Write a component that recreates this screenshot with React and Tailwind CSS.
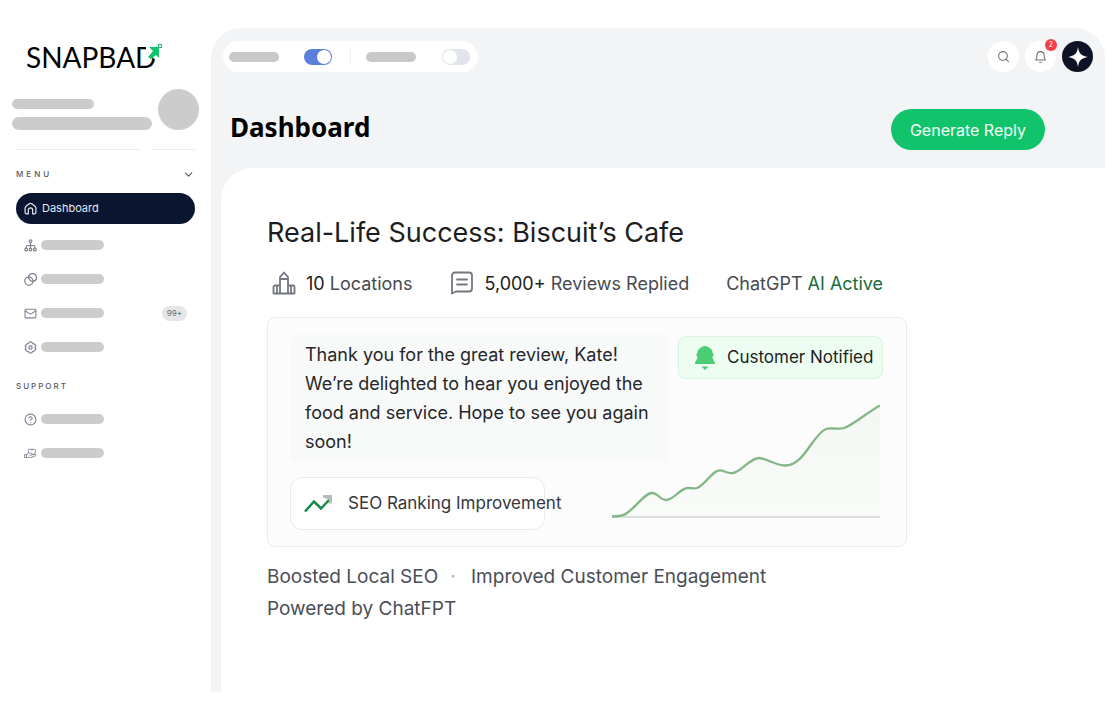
import { useState } from "react";
import { ChevronDown, CircleHelp, Mail, Search } from "lucide-react";
import { PiHandHeart } from "react-icons/pi";

function HomeIcon() {
  return (
    <svg viewBox="0 0 24 24" className="size-[13px] shrink-0" fill="none" stroke="currentColor" strokeWidth="2.200" strokeLinejoin="round" strokeLinecap="round">
      <path d="M2 11.500a4 4 0 0 1 1.500-3.200l6-5a4 4 0 0 1 5 0l6 5A4 4 0 0 1 22 11.500V19a3 3 0 0 1-3 3h-3v-7a4 4 0 0 0-8 0v7H5a3 3 0 0 1-3-3z" />
    </svg>
  );
}

function SitemapIcon() {
  return (
    <svg viewBox="0 0 24 24" className="size-[13px] shrink-0" fill="none" stroke="currentColor" strokeWidth="2.200">
      <circle cx="12" cy="4" r="2.500" />
      <path d="M12 7v10M4 17v-2a3 3 0 0 1 3-3h10a3 3 0 0 1 3 3v2" />
      <circle cx="4" cy="19.500" r="2.500" />
      <circle cx="12" cy="19.500" r="2.500" />
      <circle cx="20" cy="19.500" r="2.500" />
    </svg>
  );
}

function CoinsIcon() {
  return (
    <svg viewBox="0 0 24 24" className="size-[13px] shrink-0" fill="none" stroke="currentColor" strokeWidth="2.200">
      <circle cx="9" cy="15" r="7.500" />
      <path d="M8.500 7.500A7.200 7.200 0 1 1 16.500 15.500" />
      <path d="M8.500 7.500c.5 4 4 7.500 8 8" />
    </svg>
  );
}

function GearIcon() {
  return (
    <svg viewBox="0 0 24 24" className="size-[13px] shrink-0" fill="none" stroke="currentColor" strokeWidth="2.200" strokeLinejoin="round">
      <path d="M9.500 2.500a5 5 0 0 1 5 0L16 5l3.500.5 2.200 4L20 12l1.700 2.500-2.200 4L16 19l-1.500 2.500a5 5 0 0 1-5 0L8 19l-3.500-.5-2.200-4L4 12 2.300 9.500l2.200-4L8 5z" />
      <circle cx="12" cy="12" r="3" />
    </svg>
  );
}

const menuItems = [
  { name: "Network", icon: <SitemapIcon /> },
  { name: "Billing", icon: <CoinsIcon /> },
  { name: "Inbox", icon: <Mail size={13} />, badge: "99+" },
  { name: "Settings", icon: <GearIcon /> },
];

const supportItems = [
  { name: "Help", icon: <CircleHelp size={13} /> },
  { name: "Care", icon: <PiHandHeart size={13} /> },
];

function NavItem({ item }) {
  return (
    <li>
      <a href="#" aria-label={item.name} className="flex h-[34px] items-center pl-2 pr-2 text-[#7c8190]">
        <span className="w-[17px]">{item.icon}</span>
        <span className="h-[10px] w-[63px] rounded-full bg-[#cccccc]" />
        {item.badge && (
          <span className="ml-auto flex h-[15px] items-center rounded-full bg-[#e6e6e8] px-[5px] text-[8px] text-[#666a72]">
            {item.badge}
          </span>
        )}
      </a>
    </li>
  );
}

function Logo() {
  return (
    <a href="#" aria-label="Snapbad" className="relative ml-[14px] flex h-[28px] w-[137px] items-center font-[Lato,sans-serif] text-[28px] leading-none text-black">
      SNAPBAD
      <svg viewBox="0 0 17 17" className="absolute right-0 top-0 size-[17px]">
        <path d="M0 2h14v15h-4l-4-3-6 2z" fill="#fff" />
        <path d="M3 4h10v11l-3-3-5 4-3-2 5-6z" fill="#10c56e" />
        <rect x="12.500" y="1.500" width="3" height="3" fill="none" stroke="#10c56e" />
      </svg>
    </a>
  );
}

function Sidebar() {
  return (
    <aside className="w-[211px] shrink-0 pl-3 pr-4 pt-[43px]">
      <Logo />
      <div className="-mr-1 mt-[18px] flex items-end justify-between">
        <div className="flex flex-col gap-2">
          <div className="h-[10px] w-[82px] rounded-full bg-[#cccccc]" />
          <div className="h-[13px] w-[140px] rounded-full bg-[#cccccc]" />
        </div>
        <div className="size-[41px] rounded-full bg-[#cccccc]" />
      </div>
      <div className="ml-1 mt-[19px] flex gap-3">
        <div className="h-px grow bg-[#ececee]" />
        <div className="h-px w-[43px] bg-[#ececee]" />
      </div>
      <nav className="pl-1">
        <button className="mt-4 flex h-4 w-full items-center justify-between text-[8px] font-medium tracking-[3px] text-[#55585e]">
          MENU
          <ChevronDown size={13} />
        </button>
        <a href="#" className="mt-[11px] flex h-[31px] items-center gap-[5px] rounded-full bg-[#0a1530] pl-2 text-[11px] text-[#e4e8f0]">
          <HomeIcon />
          Dashboard
        </a>
        <ul className="mt-1">
          {menuItems.map((item) => <NavItem key={item.name} item={item} />)}
        </ul>
        <h2 className="mt-[14px] h-4 text-[8px] font-medium leading-4 tracking-[2px] text-[#55585e]">SUPPORT</h2>
        <ul className="mt-2">
          {supportItems.map((item) => <NavItem key={item.name} item={item} />)}
        </ul>
      </nav>
    </aside>
  );
}

function Toggle({ label, defaultChecked }) {
  const [on, setOn] = useState(defaultChecked);
  return (
    <input
      type="checkbox"
      role="switch"
      aria-label={label}
      checked={on}
      onChange={() => setOn(!on)}
      className="flex h-4 w-7 appearance-none items-center rounded-full bg-[#e1e4ec] p-px before:size-[14px] before:rounded-full before:bg-white before:content-[''] checked:justify-end checked:bg-[#5b80dc]"
    />
  );
}

function TopBar() {
  return (
    <div className="flex items-center justify-between px-3">
      <div className="flex h-[31px] items-center rounded-full bg-white pl-[6px] pr-2">
        <div className="h-[10px] w-[50px] rounded-full bg-[#c9c9c9]" />
        <div className="ml-[25px] flex"><Toggle label="First option" defaultChecked={true} /></div>
        <div className="ml-[18px] mr-[15px] h-4 w-px bg-[#eeeff1]" />
        <div className="h-[10px] w-[50px] rounded-full bg-[#c9c9c9]" />
        <div className="ml-[26px] flex"><Toggle label="Second option" defaultChecked={false} /></div>
      </div>
      <div className="flex items-center gap-[6px]">
        <button aria-label="Search" className="flex size-[31px] items-center justify-center rounded-full bg-white text-[#6d7076]">
          <Search size={13} />
        </button>
        <button aria-label="Notifications" className="relative flex size-[31px] items-center justify-center rounded-full bg-white text-[#6d7076]">
          <svg viewBox="0 0 24 24" className="size-[13px]" fill="none" stroke="currentColor" strokeWidth="2" strokeLinejoin="round" strokeLinecap="round">
            <path d="M3 18.500c2-2 2.500-4 2.500-9a6.500 6.500 0 0 1 13 0c0 5 .5 7 2.500 9zM10.500 22.500h3" />
          </svg>
          <span className="absolute -right-px -top-[2px] flex size-3 items-center justify-center rounded-full bg-[#f43f46] text-[7px] text-white">2</span>
        </button>
        <button aria-label="Assistant" className="flex size-[31px] items-center justify-center rounded-full bg-[#0d1226]">
          <svg viewBox="0 0 20 20" className="size-5" fill="#fff">
            <path d="M10 0c1 6.500 3 8.800 10 10-7 1.200-9 3.500-10 10-1-6.500-3-8.800-10-10 7-1.200 9-3.500 10-10z" />
          </svg>
        </button>
      </div>
    </div>
  );
}

function Stats() {
  return (
    <div className="mt-[14px] flex h-8 items-center whitespace-nowrap text-[18px] text-[#474a50]">
      <svg viewBox="0 0 24 24" className="ml-[5px] size-6" fill="none" stroke="#737780" strokeWidth="1.800" strokeLinejoin="round">
        <path d="M8 22.500V6L12 1.500 16 6v16.500zM8 8h8" />
        <path d="M8 14.500H3a1.500 1.500 0 0 0-1.500 1.500v6.500H8M16 14.500h5a1.500 1.500 0 0 1 1.500 1.500v6.500H16M5 14.500v8M19 14.500v8" />
      </svg>
      <p className="ml-[10px]"><span className="text-[#1b1c20]">10</span> Locations</p>
      <svg viewBox="0 0 24 24" className="ml-[38px] size-6" fill="none" stroke="#737780" strokeWidth="1.800" strokeLinejoin="round" strokeLinecap="round">
        <path d="M2 22.500V4.500a3 3 0 0 1 3-3h14a3 3 0 0 1 3 3v13a3 3 0 0 1-3 3H6z" />
        <path d="M7 8.500h10M7 13.500h10" />
      </svg>
      <p className="ml-[10px]"><span className="text-[#1b1c20]">5,000+</span> Reviews Replied</p>
      <p className="ml-[37px]">ChatGPT <span className="text-[#176c37]">AI Active</span></p>
    </div>
  );
}

const growthLine = "M0 113.500C7 113.500 11 113 15 110C25 103 33 90 40 90C46 90 48 97 54 97C62 97 68 85 76 85C79 85 82 86 85 85C93 82 100 68 107 67.500C112 67 115 71 121 70C129 69 138 55 147 55C153 55 166 63 173 62.500C193 62 200 32 214 26C219 24 226 27 232 25C241 22 253 11 268 2.500";

function GrowthChart() {
  return (
    <svg viewBox="0 0 268 116" className="mr-[3px] w-[268px] shrink-0" fill="none" role="img" aria-label="Growth over time">
      <defs>
        <linearGradient id="growth" x1="0" y1="0" x2="0" y2="1">
          <stop offset="0" stopColor="#f3f7f2" />
          <stop offset="1" stopColor="#f9fbf9" />
        </linearGradient>
      </defs>
      <path d={`${growthLine}V114H0z`} fill="url(#growth)" />
      <path d="M0 114h268" stroke="#d3d6d3" strokeWidth="1.500" />
      <path d={growthLine} stroke="#83b686" strokeWidth="2.300" />
    </svg>
  );
}

function ReviewCard() {
  return (
    <section className="mt-[18px] flex w-full max-w-[640px] justify-between rounded-lg border border-[#ebecec] bg-[#fbfcfb] pb-4 pl-[22px] pr-[23px] pt-4">
      <div className="w-[379px] shrink-0">
        <p className="rounded-lg bg-[#f8f9f9] px-[15px] py-[6px] text-[18px] leading-[29px] text-[#25272b]">
          Thank you for the great review, Kate!<br />
          We’re delighted to hear you enjoyed the<br />
          food and service. Hope to see you again<br />
          soon!
        </p>
        <div className="mt-[15px] flex h-[53px] w-[255px] items-center gap-[15px] whitespace-nowrap rounded-xl border border-[#e9eaea] bg-white pl-[13px] text-[17px] text-[#34363d]">
          <svg viewBox="0 0 29 18" className="w-[29px] shrink-0" fill="none">
            <path d="M1 16.500l9-10 7 7L26 4" stroke="#148a46" strokeWidth="2.500" />
            <path d="M19 0h9v8.500h-3V5l-4-2h-2z" fill="#b9bbbb" />
          </svg>
          SEO Ranking Improvement
        </div>
      </div>
      <div className="flex w-[205px] flex-col items-end pt-[2px]">
        <div className="mb-6 flex h-[43px] w-full items-center gap-3 whitespace-nowrap rounded-lg border border-[#d9f4e1] bg-[#edfdf2] pl-4 text-[17px] text-[#1b1f1d]">
          <svg viewBox="0 0 20 24" className="w-5 shrink-0" fill="#4ccd74">
            <path d="M10 0C7.500 0 6 1.500 4.500 2.500 2.500 4 2.500 5.500 2.500 7L1 9l1.500 1.500C2.500 14 0 15 0 18h20c0-3-2.500-4-2.500-7.500L19 9l-1.500-2c0-1.500 0-3-2-4.500C14 1.500 12.500 0 10 0z" />
            <path d="M6.500 20.500h7L10 24z" />
          </svg>
          Customer Notified
        </div>
        <GrowthChart />
      </div>
    </section>
  );
}

export default function App() {
  return (
    <div className="flex min-h-screen bg-white pb-[21px] pr-2 font-[Inter,sans-serif]">
      <Sidebar />
      <main className="mt-7 flex grow flex-col rounded-t-[30px] bg-[#f2f4f6] pt-[13px]">
        <TopBar />
        <header className="mb-[18px] mt-[37px] flex items-start justify-between pl-[19px] pr-[60px]">
          <h1 className="font-['Noto_Sans',sans-serif] text-[26px] font-bold leading-9 text-black">Dashboard</h1>
          <button className="h-[41px] rounded-full bg-[#11c46c] px-[19px] text-[16px] text-[#effff5]">Generate Reply</button>
        </header>
        <div className="ml-[10px] grow rounded-tl-[32px] bg-white pl-[46px] pt-[45px]">
          <h2 className="text-[27px] leading-10 text-[#1c1d21]">Real-Life Success: Biscuit’s Cafe</h2>
          <Stats />
          <ReviewCard />
          <ul className="mt-[14px] flex max-w-[520px] flex-wrap whitespace-nowrap text-[19px] leading-8 text-[#4b4e56]">
            <li className="w-[168px]">Boosted Local SEO</li>
            <li aria-hidden="true" className="w-9 text-center text-[#a9abb0]">·</li>
            <li>Improved Customer Engagement</li>
            <li className="w-full">Powered by ChatFPT</li>
          </ul>
        </div>
      </main>
    </div>
  );
}
